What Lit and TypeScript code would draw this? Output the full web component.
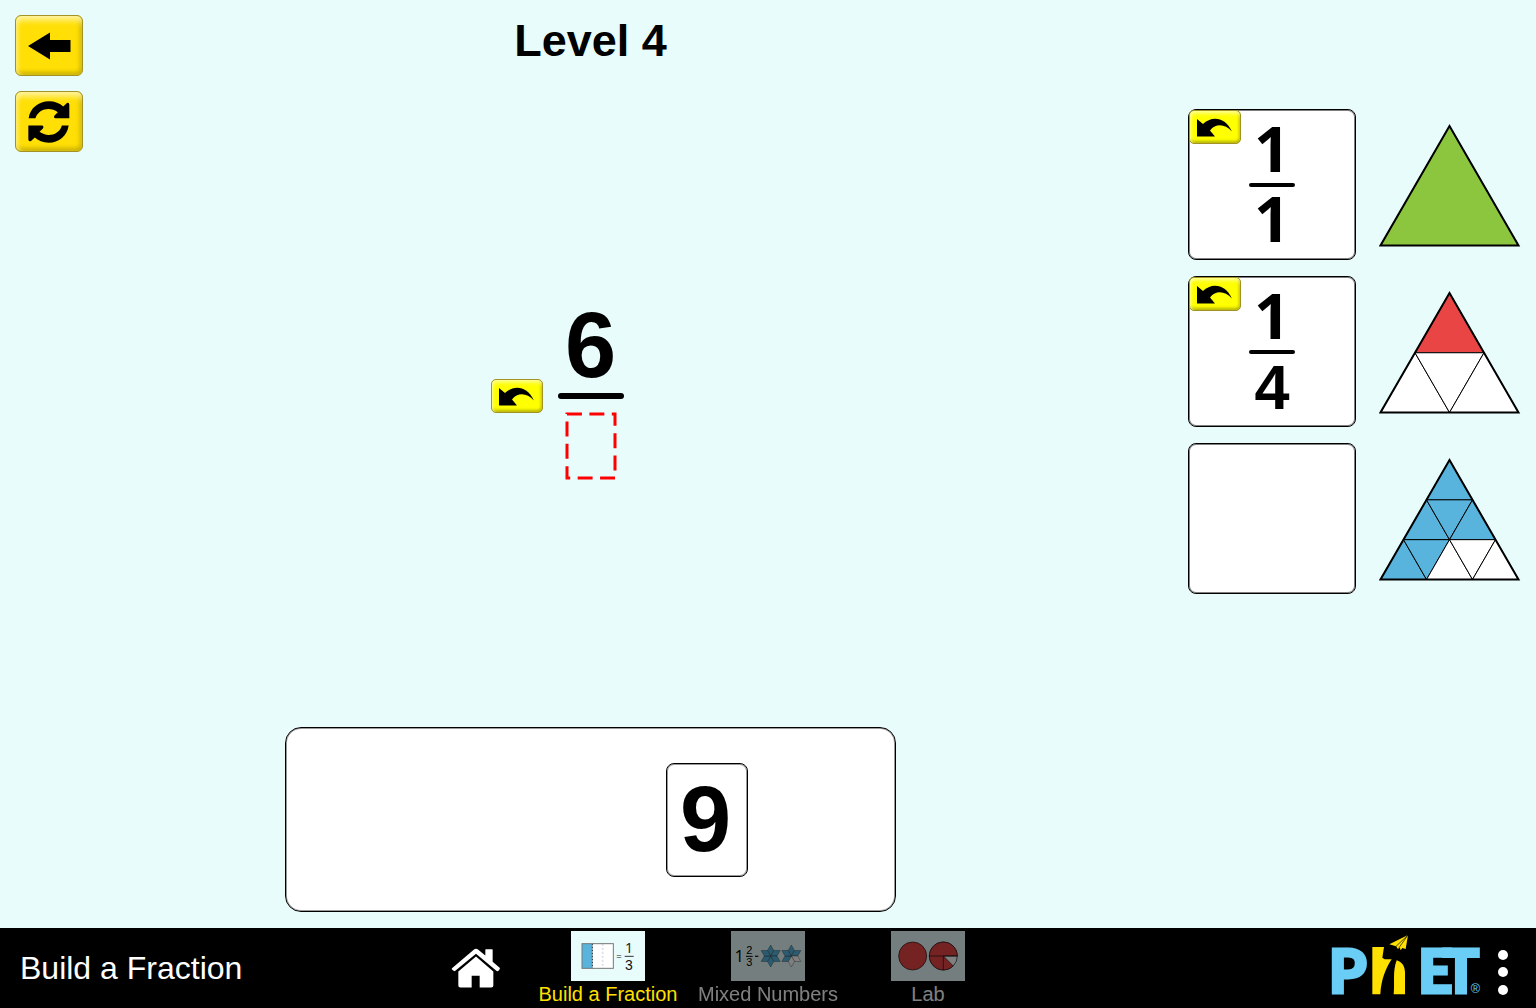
import { LitElement, html, svg, css } from "lit";
import { customElement, property } from "lit/decorators.js";

const undoArrow = html`<svg class="glyph" viewBox="0 -1 36 20" aria-hidden="true">
  <path d="M0 1 L6 6 C14 -2 28 -2 35 13.500 C28 6 19 5 13 12.500 L18 18.500 L0 18.500 Z" />
</svg>`;

@customElement("push-button")
class PushButton extends LitElement {
  @property() label = "";
  @property({ reflect: true }) size = "large";

  static styles = css`
    :host {
      display: block;
    }
    .face {
      display: flex;
      align-items: center;
      justify-content: center;
      width: 68px;
      height: 61px;
      padding: 0;
      border: 1px solid #a39325;
      border-radius: 6px;
      background: #ffdf05;
      box-shadow: inset 0 7px 6px -3px #fff5a8, inset 4px 0 4px -2px #ffed70,
        inset 0 -5px 4px -2px #c9b004, inset -4px 0 4px -2px #c9b004;
      cursor: pointer;
    }
    :host([size="small"]) .face {
      width: 52px;
      height: 34px;
      border-radius: 5px;
      background: #ffff00;
      box-shadow: inset 0 4px 4px -2px #ffffb0, inset 3px 0 3px -2px #ffff90,
        inset 0 -4px 3px -2px #b4b40a, inset -3px 0 3px -2px #b4b40a;
    }
  `;

  render() {
    return html`<button class="face" aria-label=${this.label}><slot></slot></button>`;
  }
}

@customElement("fraction-card")
class FractionCard extends LitElement {
  @property({ type: Number }) numerator = 0;
  @property({ type: Number }) denominator = 0;

  static styles = css`
    .card {
      position: relative;
      box-sizing: border-box;
      display: flex;
      flex-direction: column;
      align-items: center;
      justify-content: center;
      width: 168px;
      height: 151px;
      border: 1px solid #000;
      border-radius: 8px;
      background: #fff;
      box-shadow: inset 0 0 0 1px rgba(0, 0, 0, 0.5);
    }
    .digit {
      font: bold 63px/48px "Liberation Sans", Arial, sans-serif;
    }
    .one {
      font-family: "Open Sans", "Liberation Sans", sans-serif;
      line-height: 0;
    }
    .bar {
      width: 46px;
      height: 4px;
      margin: 9px 0;
      border-radius: 2px;
      background: #000;
    }
    .undo {
      position: absolute;
      top: 0;
      left: 0;
    }
    .glyph {
      width: 36px;
      height: 20px;
    }
  `;

  private digit(value: number) {
    return html`<span class="digit"><span class=${value === 1 ? "one" : ""}>${value}</span></span>`;
  }

  render() {
    if (!this.denominator) return html`<div class="card"></div>`;
    return html`<div class="card">
      <push-button class="undo" size="small" label="Undo">${undoArrow}</push-button>
      ${this.digit(this.numerator)}
      <span class="bar"></span>
      ${this.digit(this.denominator)}
    </div>`;
  }
}

@customElement("triangle-shape")
class TriangleShape extends LitElement {
  @property({ type: Number }) rows = 1;
  @property({ type: Number }) filled = 1;
  @property() color = "#8cc63f";

  static styles = css`
    .shape {
      display: block;
      width: 142px;
      height: 124px;
    }
    .cell {
      stroke: #000;
      stroke-width: 1;
    }
    .outline {
      fill: none;
      stroke: #000;
      stroke-width: 2;
    }
  `;

  private cells() {
    const side = 138 / this.rows;
    const high = 119.5 / this.rows;
    const list: string[] = [];
    for (let r = 0; r < this.rows; r++) {
      const top = 3 + r * high;
      const base = top + high;
      const left = 70.5 - ((r + 1) * side) / 2;
      for (let c = 0; c <= r; c++) {
        const x = left + c * side;
        list.push(`${x},${base} ${x + side / 2},${top} ${x + side},${base}`);
        if (c < r) {
          list.push(`${x + side / 2},${top} ${x + side * 1.5},${top} ${x + side},${base}`);
        }
      }
    }
    return list;
  }

  render() {
    return html`<svg class="shape" viewBox="0 0 142 124" role="img" aria-label="Triangle">
      ${this.cells().map(
        (points, i) =>
          svg`<polygon class="cell" points=${points} fill=${i < this.filled ? this.color : "#fff"} />`
      )}
      <polygon class="outline" points="70.5,3 139.5,122.500 1.5,122.500" />
    </svg>`;
  }
}

const rhombus = (cx: number, cy: number, k: number) => {
  const at = (r: number, deg: number) => {
    const a = (deg * Math.PI) / 180;
    return `${(cx + r * Math.cos(a)).toFixed(1)},${(cy + r * Math.sin(a)).toFixed(1)}`;
  };
  const d = -90 + k * 60;
  return `${cx},${cy} ${at(19, d - 30)} ${at(33, d)} ${at(19, d + 30)}`;
};

const star = (cx: number, cy: number, empty: number[]) =>
  [0, 1, 2, 3, 4, 5].map(
    (k) =>
      svg`<polygon points=${rhombus(cx, cy, k)} fill=${empty.includes(k) ? "#fff" : "#58b4dd"}
        stroke="#222" stroke-width="1" />`
  );

const buildIcon = html`<svg class="thumb" viewBox="394 18 222 150" aria-hidden="true">
  <rect x="427" y="56" width="94" height="74" fill="#fff" />
  <rect x="427" y="56" width="31" height="74" fill="#58b4dd" />
  <path d="M458 56V130" stroke="#222" stroke-width="3" stroke-dasharray="5 4" />
  <path d="M489 56V130" stroke="#ddd" stroke-width="5" stroke-dasharray="6 6" />
  <rect x="427" y="56" width="94" height="74" fill="none" stroke="#777" stroke-width="3" />
  <g font-family="Liberation Sans, Arial, sans-serif" fill="#111" text-anchor="middle">
    <text x="538" y="101" font-size="28">=</text>
    <text x="568" y="84" font-size="42" font-family="Open Sans, sans-serif">1</text>
    <text x="568" y="134" font-size="42">3</text>
  </g>
  <path d="M555 94H582" stroke="#333" stroke-width="3" />
</svg>`;

const mixedIcon = html`<svg class="thumb" viewBox="123 18 222 150" aria-hidden="true">
  <g font-family="Liberation Sans, Arial, sans-serif" fill="#000" text-anchor="middle">
    <text x="148" y="110" font-size="50" font-family="Open Sans, sans-serif">1</text>
    <text x="178" y="87" font-size="33">2</text>
    <text x="178" y="124" font-size="33">3</text>
  </g>
  <path d="M168 94H188" stroke="#000" stroke-width="3" />
  <path d="M195 94H205" stroke="#222" stroke-width="4" />
  ${star(242, 93, [])} ${star(304, 93, [2, 3])}
</svg>`;

const labIcon = html`<svg class="thumb" viewBox="603 18 222 150" aria-hidden="true">
  <g stroke="#111" stroke-width="2">
    <circle cx="668" cy="93" r="42" fill="#e94545" />
    <circle cx="760" cy="93" r="42" fill="#fff" />
    <path d="M760 93H802A42 42 0 1 0 789.700 122.700Z" fill="#e94545" />
    <path d="M718 93H802M760 93V135" fill="none" />
  </g>
</svg>`;

@customElement("app-root")
class AppRoot extends LitElement {
  static styles = css`
    :host {
      display: grid;
      grid-template-rows: 1fr 80px;
      min-height: 100vh;
      background: #e8fcfc;
      color: #000;
      font-family: "Liberation Sans", Arial, sans-serif;
    }
    .play {
      display: grid;
      grid-template-columns: 98px 1fr 453px;
    }
    .tools {
      display: flex;
      flex-direction: column;
      gap: 15px;
      padding: 15px 0 0 15px;
    }
    .back {
      width: 44px;
      height: 28px;
    }
    .refresh {
      width: 42px;
      height: 42px;
    }
    .glyph {
      width: 36px;
      height: 20px;
    }
    .center {
      display: flex;
      flex-direction: column;
      align-items: center;
      padding-bottom: 16px;
    }
    .title {
      margin: 0;
      padding-top: 17px;
      font-size: 45px;
      line-height: 48px;
      font-weight: bold;
    }
    .stage {
      flex: 1;
      align-self: stretch;
      display: grid;
      grid-template-columns: 1fr auto 1fr;
      align-items: center;
      gap: 15px;
    }
    .undo {
      justify-self: end;
    }
    .fraction {
      display: flex;
      flex-direction: column;
      align-items: center;
      gap: 13px;
    }
    .digit {
      padding-bottom: 2px;
      font-size: 92px;
      line-height: 66px;
      font-weight: bold;
    }
    .bar {
      width: 66px;
      height: 6px;
      border-radius: 3px;
      background: #000;
    }
    .empty {
      display: block;
      width: 52px;
      height: 68px;
    }
    .tray {
      box-sizing: border-box;
      display: grid;
      grid-template-columns: repeat(5, 82px);
      justify-content: center;
      align-content: center;
      gap: 34px;
      width: 611px;
      height: 185px;
      border: 1px solid #000;
      border-radius: 16px;
      background: #fff;
      box-shadow: inset 0 0 0 1px rgba(0, 0, 0, 0.4);
    }
    .number {
      grid-column: 4;
      height: 114px;
      padding: 0 2px 2px 0;
      border: 1px solid #000;
      border-radius: 8px;
      background: #fff;
      box-shadow: inset 0 0 0 1px rgba(0, 0, 0, 0.4);
      color: #000;
      font: bold 92px/108px "Liberation Sans", Arial, sans-serif;
    }
    .targets {
      display: flex;
      flex-direction: column;
      align-items: flex-end;
      gap: 16px;
      padding: 109px 15px 0 0;
    }
    .target {
      display: flex;
      align-items: center;
      gap: 23px;
    }
    .nav {
      display: grid;
      grid-template-columns: 1fr auto 1fr;
      background: #000;
      color: #fff;
    }
    .left {
      display: flex;
      align-items: center;
      justify-content: space-between;
      padding-left: 20px;
    }
    .name {
      font-size: 32px;
      line-height: 40px;
    }
    .home {
      display: flex;
      align-items: center;
      justify-content: center;
      width: 104px;
      height: 80px;
      padding: 0;
      border: 0;
      background: none;
      cursor: pointer;
    }
    .house {
      width: 50px;
      height: 41px;
    }
    .tabs {
      display: flex;
    }
    .tab {
      display: flex;
      flex-direction: column;
      align-items: center;
      gap: 2px;
      width: 160px;
      padding: 3px 0 0;
      border: 0;
      background: none;
      color: #fff;
      font: 20px/22px "Liberation Sans", Arial, sans-serif;
      opacity: 0.5;
      cursor: pointer;
    }
    .selected {
      color: #ffe000;
      opacity: 1;
    }
    .thumb {
      display: block;
      width: 74px;
      height: 50px;
      background: #e8fcfc;
    }
    .right {
      display: flex;
      align-items: center;
      justify-content: flex-end;
      gap: 12px;
      padding-right: 23px;
    }
    .logo {
      display: block;
      width: 150px;
      height: 70px;
      overflow: visible;
    }
    .menu {
      display: flex;
      padding: 8px 0 0;
      border: 0;
      background: none;
      cursor: pointer;
    }
    .dots {
      width: 20px;
      height: 48px;
    }
  `;

  render() {
    return html`
      <main class="play">
        <div class="tools">
          <push-button label="Back">
            <svg class="back" viewBox="0 0 44 28" aria-hidden="true">
              <path d="M1 14 L23 0.500 V8 H43.500 V20 H23 V27.500 Z" />
            </svg>
          </push-button>
          <push-button label="Refresh">
            <svg class="refresh" viewBox="87 304 122 124" aria-hidden="true">
              <path d="M88 355C92 325 118 305 148 305C165 305 180 311 190 320L201 310Q207 307 208 314V355H166Q160 352 165 346L174 337C152 320 117 326 108 355Z" />
              <path d="M206 376C202 406 177 427 147 427C130 427 116 421 106 412L95 422Q88 425 87 418V376H128Q134 379 130 385L120 395C142 412 178 405 186 376Z" />
            </svg>
          </push-button>
        </div>

        <section class="center">
          <h1 class="title">Level 4</h1>
          <div class="stage">
            <push-button class="undo" size="small" label="Undo">${undoArrow}</push-button>
            <div class="fraction">
              <span class="digit">6</span>
              <span class="bar"></span>
              <svg class="empty" viewBox="0 0 52 68" role="img" aria-label="Empty denominator">
                <rect x="2" y="2" width="48" height="64" fill="none" stroke="#f00"
                  stroke-width="3" pathLength="30" stroke-dasharray="2 1" />
              </svg>
            </div>
          </div>
          <div class="tray"><button class="number">9</button></div>
        </section>

        <section class="targets">
          <div class="target">
            <fraction-card numerator="1" denominator="1"></fraction-card>
            <triangle-shape rows="1" filled="1" color="#8cc63f"></triangle-shape>
          </div>
          <div class="target">
            <fraction-card numerator="1" denominator="4"></fraction-card>
            <triangle-shape rows="2" filled="1" color="#e94545"></triangle-shape>
          </div>
          <div class="target">
            <fraction-card></fraction-card>
            <triangle-shape rows="3" filled="6" color="#58b4dd"></triangle-shape>
          </div>
        </section>
      </main>

      <footer class="nav">
        <div class="left">
          <span class="name">Build a Fraction</span>
          <button class="home" aria-label="Home">
            <svg class="house" viewBox="35 69 150 122" fill="#fff" aria-hidden="true">
              <path d="M38 129L104 73Q110 69 116 73L138 91V73Q138 72 140 72H158Q160 72 160 74V110L181 128Q183 131 180 134L176 138Q174 139 171 137L110 86L48 137Q46 139 43 137L38 133Q36 131 38 129Z" />
              <path d="M57 139L110 94L162 139V181Q162 187 156 187H121V152H97V187H63Q57 187 57 181Z" />
            </svg>
          </button>
        </div>
        <nav class="tabs">
          <button class="tab selected">${buildIcon}<span>Build a Fraction</span></button>
          <button class="tab">${mixedIcon}<span>Mixed Numbers</span></button>
          <button class="tab">${labIcon}<span>Lab</span></button>
        </nav>
        <div class="right">
          <a href="#phet" aria-label="PhET">
            <svg class="logo" viewBox="33 24 450 210" aria-hidden="true">
              <g font-family="Lato, Open Sans, sans-serif" font-weight="900" font-size="181"
                fill="#6acdf5" stroke="#6acdf5" stroke-width="9">
                <text x="26" y="204">P</text>
                <text x="294 368" y="204">ET</text>
              </g>
              <path fill="#ffe000" d="M157 66H192L187 98L194 103H215C198 128 183 165 181 208H157Z" />
              <path fill="#ffe000" d="M230 106C246 110 255 125 255 142V208H221C225 175 217 140 230 106Z" />
              <path fill="#ffe000" d="M264 30L208 58L228 64L234 72L239 67L242 76L247 69L257 72Z" />
              <path d="M264 30L228 64M264 30L237 68" stroke="#000" stroke-width="2" fill="none" />
              <text x="452" y="203" font-family="Liberation Sans, Arial, sans-serif" font-size="38" fill="#6acdf5">®</text>
            </svg>
          </a>
          <button class="menu" aria-label="Menu">
            <svg class="dots" viewBox="0 0 20 48" fill="#fff" aria-hidden="true">
              <circle cx="10" cy="7" r="5" />
              <circle cx="10" cy="24" r="5" />
              <circle cx="10" cy="42" r="5" />
            </svg>
          </button>
        </div>
      </footer>
    `;
  }
}
